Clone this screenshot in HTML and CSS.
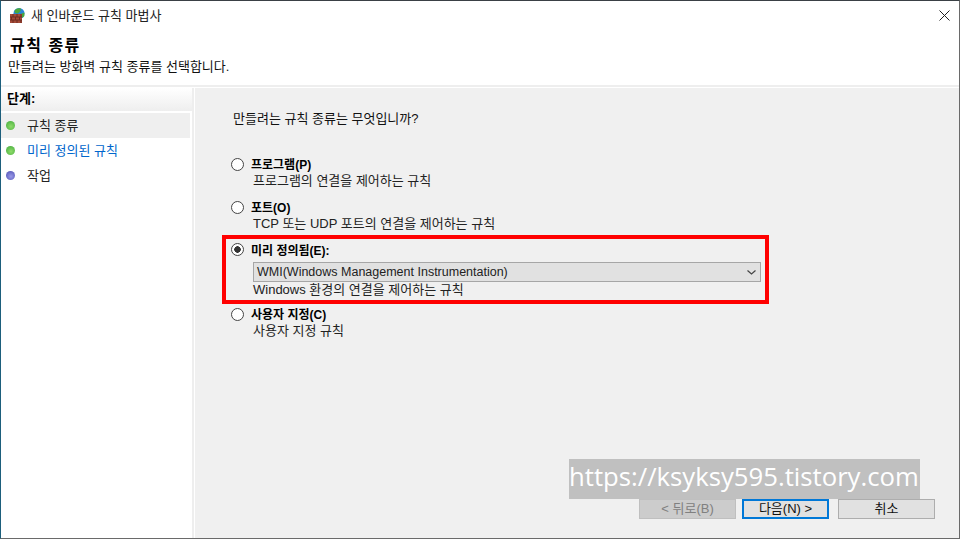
FILE: index.html
```html
<!DOCTYPE html>
<html lang="ko">

<head>
    <meta charset="UTF-8">
    <title>새 인바운드 규칙 마법사</title>
    <link rel="stylesheet" href="styles.css">
</head>

<body>
    <div class="window">
        <!-- Title bar -->
        <div class="titlebar">
            <svg class="app-icon" width="16" height="16" viewBox="0 0 16 16">
                <circle cx="10" cy="5.500" r="5.500" fill="#2a86d6"/>
                <path d="M5.500 2.500Q8 -0.500 12 0.500L11.500 3L9 5.500L6 5Z" fill="#49a83a"/>
                <path d="M11.500 6L15.500 4.500Q16 8 14 9.500L12 9Z" fill="#49a83a"/>
                <rect x="1" y="6" width="12" height="9" fill="#a54a38"/>
                <path d="M1 9H13M1 12H13M4 6V9M8 6V9M12 6V9M2.500 9V12M6.500 9V12M10.500 9V12M4 12V15M8 12V15M12 12V15" stroke="#6e2c20" stroke-width="1" fill="none"/>
            </svg>
            <span class="title-text">새 인바운드 규칙 마법사</span>
            <svg class="close-icon" width="11" height="11" viewBox="0 0 11 11">
                <path d="M0.500 0.500L10.500 10.500M10.500 0.500L0.500 10.500" stroke="#222" stroke-width="1" fill="none"/>
            </svg>
        </div>

        <!-- Header -->
        <div class="header">
            <h1>규칙 종류</h1>
            <p>만들려는 방화벽 규칙 종류를 선택합니다.</p>
        </div>

        <div class="content">
            <!-- Steps -->
            <div class="steps">
                <div class="steps-title">단계:</div>
                <div class="step step-current"><span class="dot dot-green"></span>규칙 종류</div>
                <div class="step step-link"><span class="dot dot-green"></span>미리 정의된 규칙</div>
                <div class="step"><span class="dot dot-blue"></span>작업</div>
            </div>

            <!-- Main panel -->
            <div class="panel">
                <p class="question">만들려는 규칙 종류는 무엇입니까?</p>

                <div class="option option-first">
                    <span class="radio"></span>
                    <div>
                        <div class="option-label">프로그램(P)</div>
                        <div class="option-desc">프로그램의 연결을 제어하는 규칙</div>
                    </div>
                </div>

                <div class="option">
                    <span class="radio"></span>
                    <div>
                        <div class="option-label">포트(O)</div>
                        <div class="option-desc">TCP 또는 UDP 포트의 연결을 제어하는 규칙</div>
                    </div>
                </div>

                <div class="option option-selected">
                    <span class="radio radio-on"></span>
                    <div class="option-body">
                        <div class="option-label">미리 정의됨(E):</div>
                        <div class="select">
                            <span class="select-text">WMI(Windows Management Instrumentation)</span>
                            <svg width="9" height="5" viewBox="0 0 9 5">
                                <path d="M0.500 0.500L4.500 4L8.500 0.500" stroke="#444" stroke-width="1.200" fill="none"/>
                            </svg>
                        </div>
                        <div class="option-desc">Windows 환경의 연결을 제어하는 규칙</div>
                    </div>
                </div>

                <div class="option">
                    <span class="radio"></span>
                    <div>
                        <div class="option-label">사용자 지정(C)</div>
                        <div class="option-desc">사용자 지정 규칙</div>
                    </div>
                </div>

                <div class="buttons">
                    <div class="btn btn-disabled">&lt; 뒤로(B)</div>
                    <div class="btn btn-default">다음(N) &gt;</div>
                    <div class="btn">취소</div>
                </div>
            </div>
        </div>

        <div class="watermark">https://ksyksy595.tistory.com</div>
    </div>
</body>

</html>
```

FILE: styles.css
```css
* {
    box-sizing: border-box;
}

html,
body {
    margin: 0;
    padding: 0;
    height: 539px;
    overflow: hidden;
}

body {
    font-family: "Liberation Sans", "Noto Sans CJK KR", sans-serif;
    font-size: 13px;
    line-height: 15px;
    color: #111;
    background-color: #fff;
}

.window {
    position: relative;
    display: flex;
    flex-direction: column;
    height: 539px;
    border-top: 1px solid #3a4045;
    border-left: 1px solid #1d5f7c;
    border-right: 1px solid #6a6a6a;
    border-bottom: 1px solid #6a6a6a;
}

.titlebar {
    display: flex;
    align-items: center;
    height: 29px;
    padding: 0 9px 0 8px;
    flex-shrink: 0;
}

.app-icon {
    margin-right: 6px;
}

.title-text {
    flex: 1;
    color: #222;
}

.header {
    height: 57px;
    padding-left: 7px;
    flex-shrink: 0;
    border-bottom: 2px solid #eee;
}

.header h1 {
    margin: 0 0 0 2px;
    padding-top: 7px;
    font-size: 16px;
    line-height: 18px;
    letter-spacing: 1.500px;
    font-weight: bold;
    color: #000;
}

.header p {
    margin: 4px 0 0;
    color: #111;
}

.content {
    display: flex;
    flex: 1;
    min-height: 0;
    margin-top: 1px;
}

.steps {
    width: 193px;
    flex-shrink: 0;
    border-right: 2px solid #eee;
}

.steps-title {
    height: 23px;
    padding: 3px 0 0 6px;
    font-weight: bold;
    color: #000;
    background: linear-gradient(#fff, #eee);
    margin-bottom: 2px;
}

.step {
    display: flex;
    align-items: center;
    height: 25px;
    margin-right: 2px;
    padding-left: 5px;
    color: #222;
}

.step-current {
    background-color: #efefef;
}

.step-link {
    color: #0066cc;
}

.dot {
    width: 9px;
    height: 9px;
    margin-right: 12px;
    border-radius: 50%;
}

.dot-green {
    background: radial-gradient(circle at 55% 60%, #8fdc6a, #3fa83a);
}

.dot-blue {
    background: radial-gradient(circle at 55% 60%, #9a9ae8, #4a4ab0);
}

.panel {
    position: relative;
    flex: 1;
    padding: 23px 0 0 38px;
    margin-left: 1px;
    background-color: #f0f0f0;
}

.question {
    margin: 0 0 31px;
}

.option {
    display: flex;
    align-items: flex-start;
    margin: 0 0 13px -2px;
}

.option-first {
    margin-bottom: 12px;
}

.option-label {
    font-weight: bold;
    font-size: 12px;
    height: 16px;
    padding-top: 1px;
    color: #000;
}

.option-desc {
    color: #222;
    margin-left: 2px;
}

.radio {
    width: 13px;
    height: 13px;
    margin: 1px 7px 0 0;
    flex-shrink: 0;
    border: 1px solid #444;
    border-radius: 50%;
    background-color: #fff;
}

.radio-on {
    margin-top: 0;
    background: radial-gradient(circle, #333 3px, #fff 3.500px);
}

.option-selected {
    width: 547px;
    height: 69px;
    margin: -9px 0 3px -11px;
    padding: 4px 0 0 5px;
    border: 4px solid #f00;
}

.option-body {
    width: 510px;
}

.select {
    display: flex;
    align-items: center;
    justify-content: space-between;
    height: 20px;
    margin: 3px 0 0 2px;
    padding: 0 4px 0 3px;
    border: 1px solid #a6a6a6;
    background-color: #e1e1e1;
    color: #222;
}

.select-text {
    font-size: 12.500px;
}

.buttons {
    position: absolute;
    right: 24px;
    top: 411px;
    display: flex;
    gap: 9px;
}

.btn {
    width: 97px;
    height: 20px;
    border: 1px solid #adadad;
    background-color: #e1e1e1;
    text-align: center;
    line-height: 18px;
    color: #111;
}

.btn-disabled {
    color: #808080;
    background-color: #ccc;
    border-color: #bfbfbf;
}

.btn-default {
    width: 87px;
    margin-left: -3px;
    border: 2px solid #0078d7;
    line-height: 16px;
}

.watermark {
    position: absolute;
    left: 568px;
    top: 458px;
    width: 351px;
    height: 40px;
    background-color: #c0c0c0;
    color: #fff;
    font-family: "Open Sans", sans-serif;
    font-size: 25.700px;
    line-height: 36px;
    white-space: nowrap;
}
```
